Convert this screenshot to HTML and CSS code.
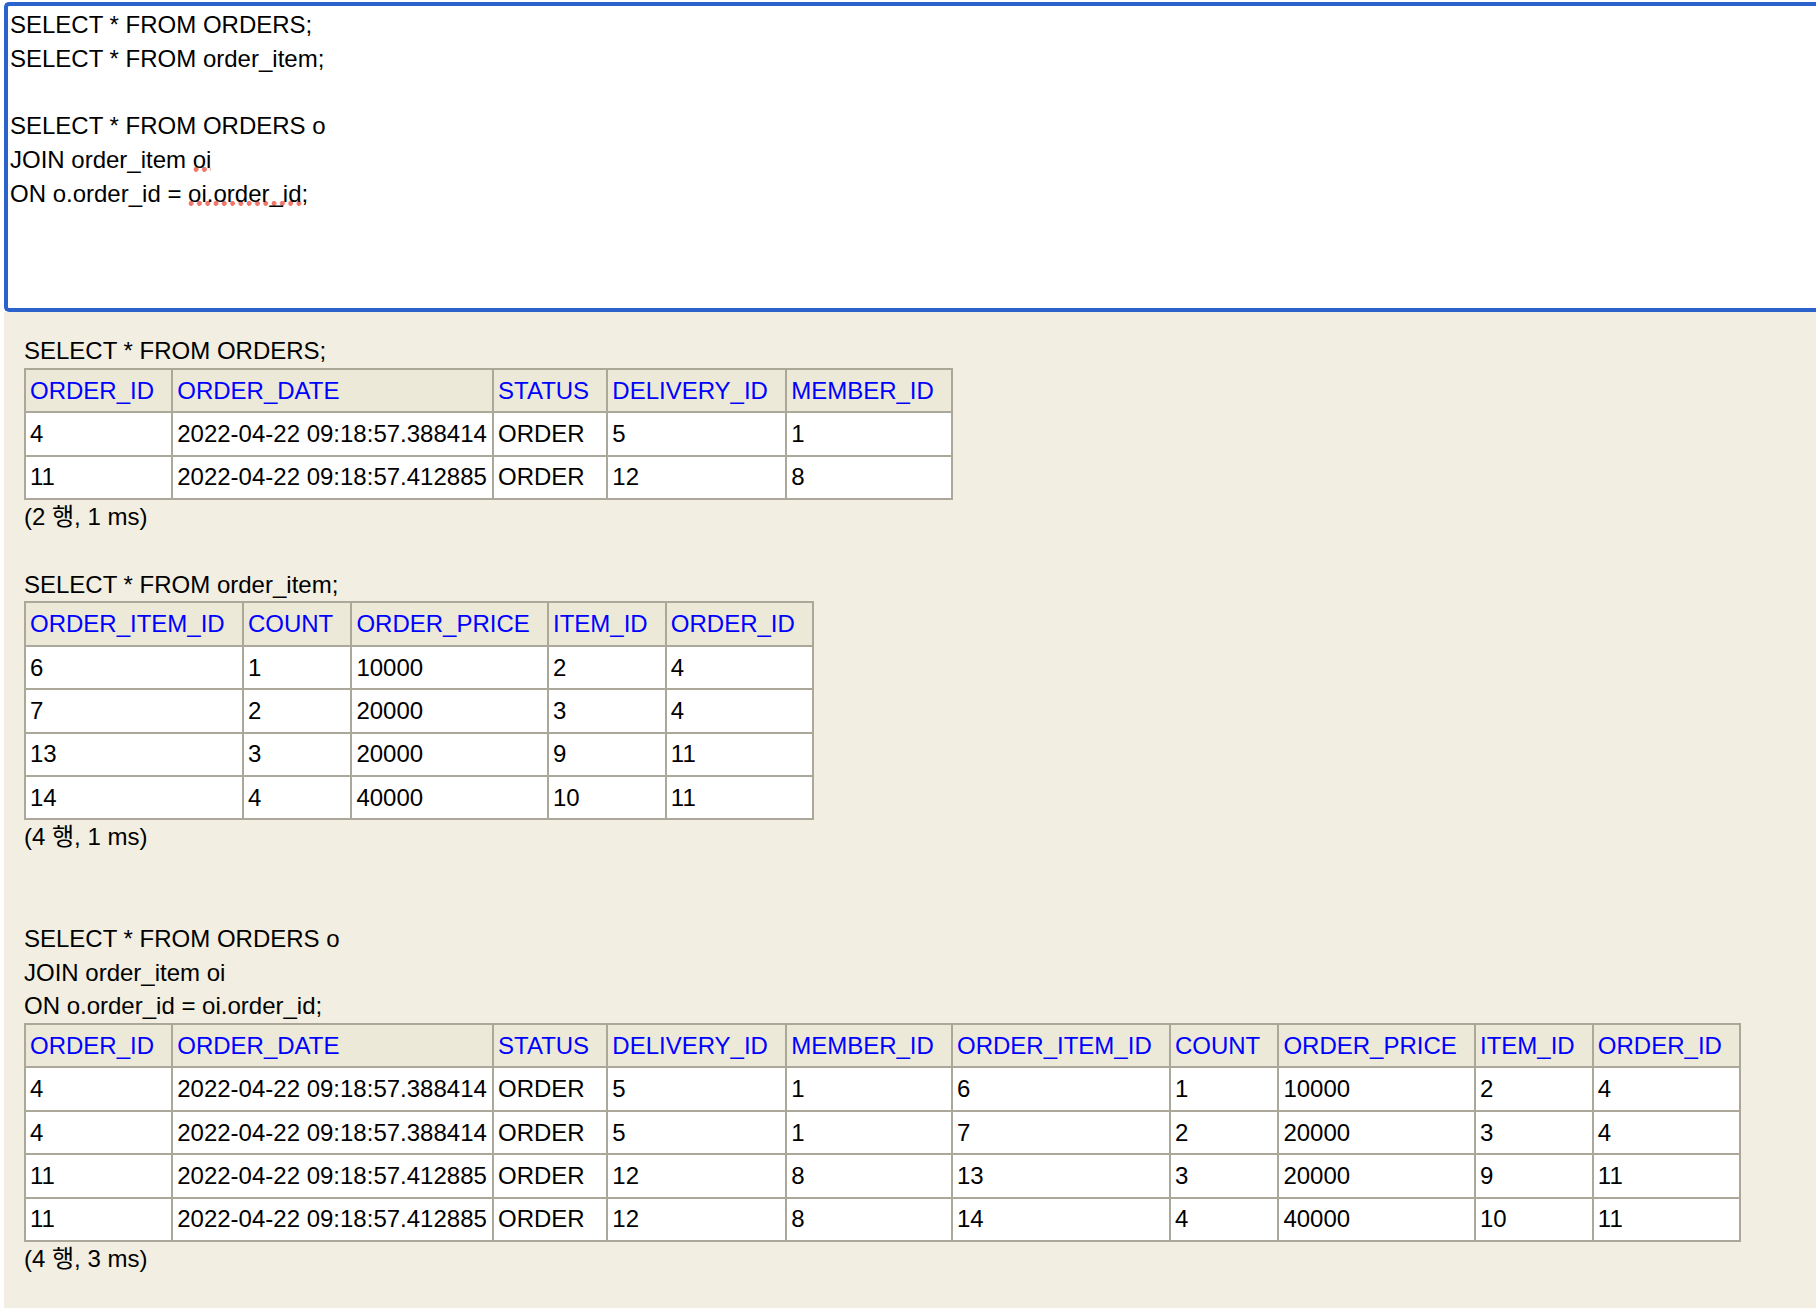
FILE: index.html
```html
<!DOCTYPE html>
<html lang="ko">
<head>
<meta charset="utf-8">
<title>H2 Console</title>
<link rel="stylesheet" href="styles.css">
</head>
<body>
<div class="app">
  <div class="editor">
    <div class="ln">SELECT * FROM ORDERS;</div>
    <div class="ln">SELECT * FROM order_item;</div>
    <div class="ln"><br></div>
    <div class="ln">SELECT * FROM ORDERS o</div>
    <div class="ln">JOIN order_item <span class="spell">oi</span></div>
    <div class="ln">ON o.order_id = <span class="spell">oi.order_id</span>;</div>
  </div>
  <div class="results">
    <div class="sql">SELECT * FROM ORDERS;</div>
    <table class="result">
      <tr><th>ORDER_ID</th><th>ORDER_DATE</th><th>STATUS</th><th>DELIVERY_ID</th><th>MEMBER_ID</th></tr>
      <tr><td>4</td><td>2022-04-22 09:18:57.388414</td><td>ORDER</td><td>5</td><td>1</td></tr>
      <tr><td>11</td><td>2022-04-22 09:18:57.412885</td><td>ORDER</td><td>12</td><td>8</td></tr>
    </table>
    <div class="info">(2 행, 1 ms)</div>
    <br>
    <div class="sql">SELECT * FROM order_item;</div>
    <table class="result">
      <tr><th>ORDER_ITEM_ID</th><th>COUNT</th><th>ORDER_PRICE</th><th>ITEM_ID</th><th>ORDER_ID</th></tr>
      <tr><td>6</td><td>1</td><td>10000</td><td>2</td><td>4</td></tr>
      <tr><td>7</td><td>2</td><td>20000</td><td>3</td><td>4</td></tr>
      <tr><td>13</td><td>3</td><td>20000</td><td>9</td><td>11</td></tr>
      <tr><td>14</td><td>4</td><td>40000</td><td>10</td><td>11</td></tr>
    </table>
    <div class="info">(4 행, 1 ms)</div>
    <br>
    <br>
    <div class="sql">SELECT * FROM ORDERS o<br>JOIN order_item oi<br>ON o.order_id = oi.order_id;</div>
    <table class="result">
      <tr><th>ORDER_ID</th><th>ORDER_DATE</th><th>STATUS</th><th>DELIVERY_ID</th><th>MEMBER_ID</th><th>ORDER_ITEM_ID</th><th>COUNT</th><th>ORDER_PRICE</th><th>ITEM_ID</th><th>ORDER_ID</th></tr>
      <tr><td>4</td><td>2022-04-22 09:18:57.388414</td><td>ORDER</td><td>5</td><td>1</td><td>6</td><td>1</td><td>10000</td><td>2</td><td>4</td></tr>
      <tr><td>4</td><td>2022-04-22 09:18:57.388414</td><td>ORDER</td><td>5</td><td>1</td><td>7</td><td>2</td><td>20000</td><td>3</td><td>4</td></tr>
      <tr><td>11</td><td>2022-04-22 09:18:57.412885</td><td>ORDER</td><td>12</td><td>8</td><td>13</td><td>3</td><td>20000</td><td>9</td><td>11</td></tr>
      <tr><td>11</td><td>2022-04-22 09:18:57.412885</td><td>ORDER</td><td>12</td><td>8</td><td>14</td><td>4</td><td>40000</td><td>10</td><td>11</td></tr>
    </table>
    <div class="info">(4 행, 3 ms)</div>
  </div>
</div>
</body>
</html>
```

FILE: styles.css
```css
html, body {
  margin: 0;
  padding: 0;
  background: #ffffff;
  overflow: hidden;
}

body {
  font-family: "Liberation Sans", "Noto Sans CJK KR", sans-serif;
  font-size: 24px;
  line-height: 33.8px;
  color: #000000;
}

.app {
  display: flex;
  flex-direction: column;
  height: 1308px;
  padding: 2px 0 0 4px;
  box-sizing: border-box;
}

.editor {
  flex: 0 0 auto;
  height: 310px;
  box-sizing: border-box;
  border: 4px solid #2c62cc;
  border-right: none;
  border-radius: 5px 0 0 5px;
  background: #ffffff;
  padding: 2px 0 0 2px;
}

.ln {
  white-space: pre;
}

.spell {
  background-image: radial-gradient(circle at 3px 2.4px, #ef776b 2.2px, rgba(239, 119, 107, 0) 2.7px);
  background-size: 8.3px 5px;
  background-repeat: repeat-x;
  background-position: 0 calc(100% - 1.3px);
}

.results {
  flex: 1 1 auto;
  background: #f2eee1;
  padding: 22px 0 0 20px;
}

.sql,
.info {
  white-space: nowrap;
}

table.result {
  border-collapse: separate;
  border-spacing: 0;
  border-left: 2px solid #aca899;
  border-top: 2px solid #aca899;
  font-size: 24px;
  line-height: 33.8px;
}

table.result th {
  background: #ece9d8;
  color: #0000ff;
  font-weight: normal;
  text-align: left;
  white-space: nowrap;
  padding: 3.8px 17.2px 3.8px 4px;
  border-right: 2px solid #aca899;
  border-bottom: 2px solid #aca899;
}

table.result td {
  background: #ffffff;
  text-align: left;
  white-space: nowrap;
  padding: 3.8px 5.2px 3.8px 4px;
  border-right: 2px solid #aca899;
  border-bottom: 2px solid #aca899;
}
```
